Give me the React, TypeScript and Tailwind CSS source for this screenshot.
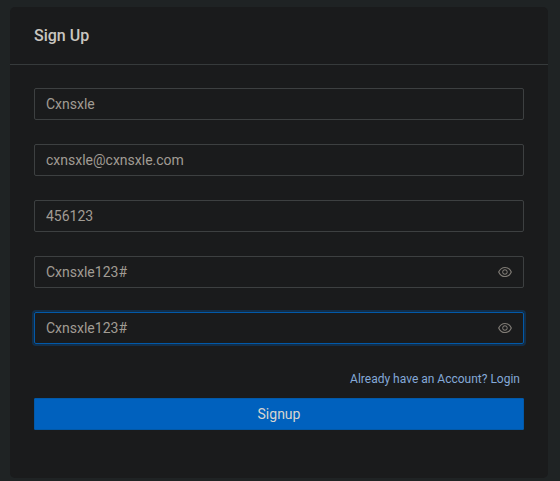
import { useState } from "react";
import { AiOutlineEye } from "react-icons/ai";

type FieldProps = {
  name: string;
  initial: string;
  password?: boolean;
  active?: boolean;
};

function Field({ name, initial, password, active }: FieldProps) {
  const [value, setValue] = useState(initial);
  const frame = active
    ? "border-[#0259a8] shadow-[0_0_0_2px_rgba(0,92,179,0.3)]"
    : "border-[#3d4041]";
  return (
    <div className={`flex h-8 items-center rounded-[2px] border px-[11px] ${frame}`}>
      <input
        aria-label={name}
        value={value}
        onChange={(e) => setValue(e.target.value)}
        className="min-w-0 flex-1 bg-transparent text-sm leading-[22px] text-[#a19c94] outline-none"
      />
      {password && <AiOutlineEye viewBox="64 64 896 896" className="size-3.5 text-[#7f7b75]" />}
    </div>
  );
}

export default function App() {
  return (
    <main className="h-[481px] w-[560px] bg-[#1f2324] pt-[7px] pr-3 pl-2.5 font-['Roboto',sans-serif]">
      <section className="h-[471px] rounded-[5px] bg-[#1a1b1c]">
        <header className="flex h-[58px] items-center border-b border-[#363a3b] px-6">
          <h1 className="text-base font-medium text-[#c9c6c0]">Sign Up</h1>
        </header>
        <form className="px-6 pt-[23px]" onSubmit={(e) => e.preventDefault()}>
          <div className="flex flex-col gap-6">
            <Field name="Username" initial="Cxnsxle" />
            <Field name="Email" initial="cxnsxle@cxnsxle.com" />
            <Field name="Code" initial="456123" />
            <Field name="Password" initial="Cxnsxle123#" password />
            <Field name="Confirm password" initial="Cxnsxle123#" password active />
          </div>
          <div className="mt-6 flex h-[22px] justify-end pr-1 text-xs leading-[22px] text-[#84a9d8]">
            <span>Already have an Account? Login</span>
          </div>
          <button className="mt-2 h-8 w-full rounded-[1px] border border-[#0259a8] bg-[#0061be] text-sm text-[#d8d5d0]">
            Signup
          </button>
        </form>
      </section>
    </main>
  );
}
